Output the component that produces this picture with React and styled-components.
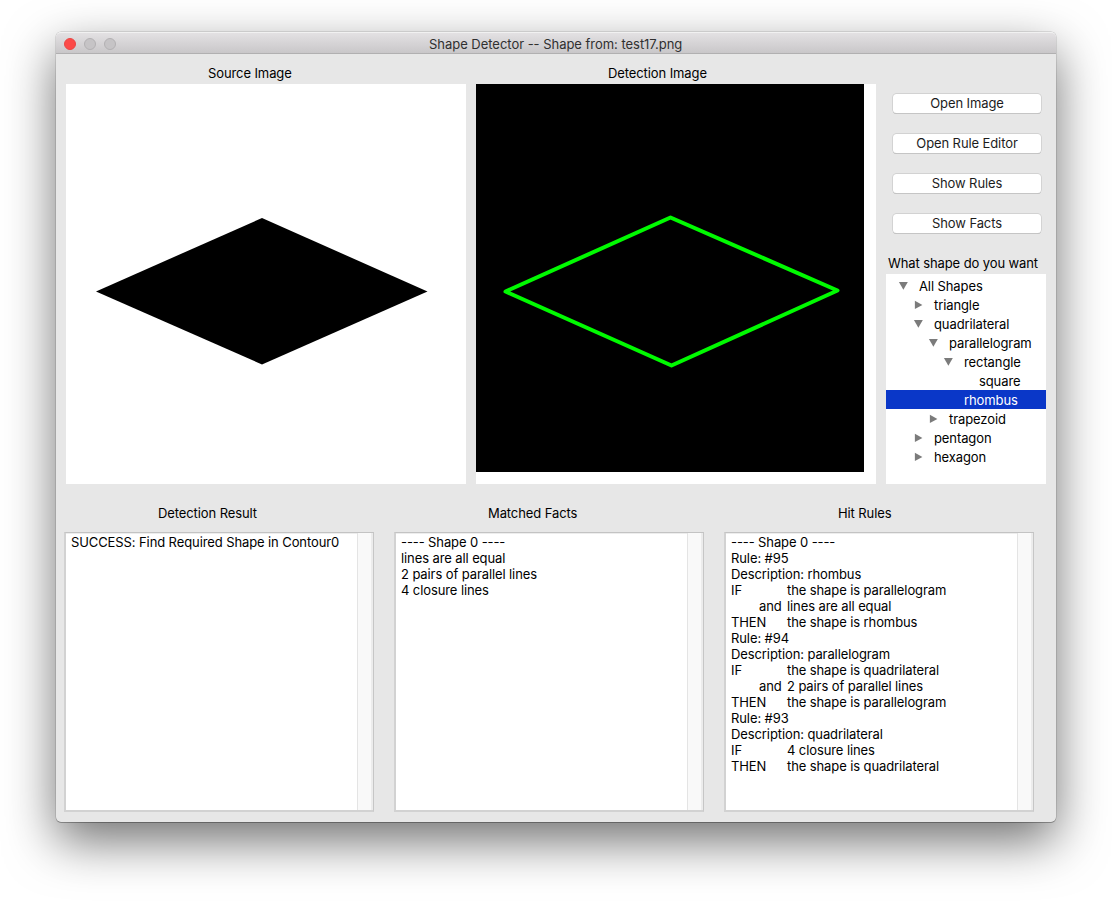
import React from "react";
import styled, { createGlobalStyle } from "styled-components";

const GlobalStyle = createGlobalStyle`
  * { box-sizing: border-box; }
  body { margin: 0; background: #fff; overflow: hidden; }
`;

const Desktop = styled.div`
  width: 1112px;
  height: 902px;
  padding: 32px 56px 80px;
  overflow: hidden;
  background: #fff;
  font-family: Inter, "Liberation Sans", sans-serif;
  font-size: 13px;
  line-height: 16px;
  letter-spacing: -0.1px;
  color: #000;
`;

const Window = styled.div`
  width: 1000px;
  height: 790px;
  border-radius: 5px;
  background: #e7e7e7;
  box-shadow: 0 0 0 0.5px rgba(0, 0, 0, 0.2), 0 1px 0 rgba(0, 0, 0, 0.22),
    0 19px 50px rgba(0, 0, 0, 0.56);
`;

const TitleBar = styled.header`
  display: grid;
  grid-template-columns: 365px 1fr;
  align-items: center;
  height: 22px;
  padding: 1px 0 0 8px;
  border-radius: 5px 5px 0 0;
  border-top: 1px solid #f1f1f1;
  border-bottom: 1px solid #b1b0b1;
  background: linear-gradient(#e3e1e3, #c9c7c9);
  color: #303030;
`;

const Lights = styled.div`
  display: flex;
  gap: 8px;
`;

const Light = styled.span`
  width: 12px;
  height: 12px;
  border-radius: 50%;
  background: ${(p) => (p.$active ? "#fc4a48" : "#c6c4c6")};
  border: 1px solid ${(p) => (p.$active ? "#ea4644" : "#b3b1b3")};
`;

const WindowTitle = styled.span`
  white-space: pre;
  letter-spacing: -0.03px;
`;

const Upper = styled.section`
  display: grid;
  grid-template-columns: 400px 400px 160px;
  column-gap: 10px;
  height: 430px;
  padding-left: 10px;
`;

const Column = styled.div`
  display: flex;
  flex-direction: column;
`;

const Heading = styled.h2`
  margin: 0;
  height: 30px;
  padding: 11px 0 0 ${(p) => p.$indent}px;
  font-size: 13px;
  font-weight: 400;
  line-height: 16px;
`;

const Picture = styled.svg`
  display: block;
  width: 400px;
  height: 400px;
  background: #fff;
`;

const Buttons = styled.div`
  display: flex;
  flex-direction: column;
  gap: 21px;
  padding: 40px 5px 1px 7px;
`;

const Button = styled.button`
  height: 19px;
  padding: 0;
  border: 0;
  border-radius: 3.5px;
  background: #fff;
  box-shadow: 0 0 0 0.7px #cbcbcb, 0 1px 0.5px #b0b0b0;
  font: inherit;
  letter-spacing: inherit;
  line-height: 19px;
  color: #1c1c1c;
`;

const Question = styled.div`
  height: 40px;
  padding: 21px 0 0 2px;
  white-space: nowrap;
`;

const Tree = styled.ul`
  list-style: none;
  margin: 0;
  padding: 2px 0 0;
  height: 210px;
  background: #fff;
`;

const TreeRow = styled.li`
  display: flex;
  align-items: center;
  height: 19px;
  padding: 1px 0 0 ${(p) => 12 + p.$level * 15}px;
  background: ${(p) => (p.$selected ? "#0a37c8" : "transparent")};
  color: ${(p) => (p.$selected ? "#fff" : "#000")};
`;

const ArrowSlot = styled.svg`
  width: 12px;
  height: 12px;
  margin-right: 9px;
  fill: #7b7b7b;
`;

const Lower = styled.section`
  display: grid;
  grid-template-columns: repeat(3, 310px);
  column-gap: 20px;
  padding: 10px 0 0 8px;
`;

const LogHeading = styled(Heading)`
  height: 38px;
`;

const LogBox = styled.div`
  display: grid;
  grid-template-columns: 1fr 16px;
  height: 280px;
  border: 2px solid #d2d2d2;
  border-top: 1px solid #c3c3c3;
  border-right: 1px solid #c6c6c6;
  background: #fff;
`;

const LogText = styled.div`
  padding: 1px 0 0 5px;
  box-shadow: inset 0 1px 0 #ededed;
`;

const ScrollTrack = styled.div`
  border-left: 1px solid #e4e4e4;
  border-right: 2px solid #ececec;
  background: #f9f9f9;
`;

const Line = styled.div`
  display: grid;
  grid-template-columns: ${(p) => (p.$columns ? "28px 28px 1fr" : "1fr")};
  height: 16px;
  white-space: pre;
`;

const Arrow = ({ state }) => (
  <ArrowSlot viewBox="0 0 12 12">
    {state === "open" && <path d="M0.9 2h8.9L5.4 9.7z" />}
    {state === "closed" && <path d="M1.9 1.7v8.4L9.4 5.9z" />}
  </ArrowSlot>
);

const tree = [
  { name: "All Shapes", level: 0, state: "open" },
  { name: "triangle", level: 1, state: "closed" },
  { name: "quadrilateral", level: 1, state: "open" },
  { name: "parallelogram", level: 2, state: "open" },
  { name: "rectangle", level: 3, state: "open" },
  { name: "square", level: 4 },
  { name: "rhombus", level: 3, selected: true },
  { name: "trapezoid", level: 2, state: "closed" },
  { name: "pentagon", level: 1, state: "closed" },
  { name: "hexagon", level: 1, state: "closed" },
];

const actions = ["Open Image", "Open Rule Editor", "Show Rules", "Show Facts"];

const logs = [
  {
    title: "Detection Result",
    indent: 94,
    lines: [["SUCCESS: Find Required Shape in Contour0"]],
  },
  {
    title: "Matched Facts",
    indent: 94,
    lines: [
      ["---- Shape 0 ----"],
      ["lines are all equal"],
      ["2 pairs of parallel lines"],
      ["4 closure lines"],
    ],
  },
  {
    title: "Hit Rules",
    indent: 114,
    lines: [
      ["---- Shape 0 ----"],
      ["Rule: #95"],
      ["Description: rhombus"],
      ["IF", "", "the shape is parallelogram"],
      ["", "and", "lines are all equal"],
      ["THEN", "", "the shape is rhombus"],
      ["Rule: #94"],
      ["Description: parallelogram"],
      ["IF", "", "the shape is quadrilateral"],
      ["", "and", "2 pairs of parallel lines"],
      ["THEN", "", "the shape is parallelogram"],
      ["Rule: #93"],
      ["Description: quadrilateral"],
      ["IF", "", "4 closure lines"],
      ["THEN", "", "the shape is quadrilateral"],
    ],
  },
];

export default function App() {
  return (
    <Desktop>
      <GlobalStyle />
      <Window>
        <TitleBar>
          <Lights>
            <Light $active />
            <Light />
            <Light />
          </Lights>
          <WindowTitle>Shape Detector -- Shape from: test17.png</WindowTitle>
        </TitleBar>
        <Upper>
          <Column>
            <Heading $indent={142}>Source Image</Heading>
            <Picture viewBox="0 0 400 400">
              <path d="M30 207.5 196 134 361.5 207.5 196 280.5z" fill="#000" />
            </Picture>
          </Column>
          <Column>
            <Heading $indent={132}>Detection Image</Heading>
            <Picture viewBox="0 0 400 400">
              <rect width="388" height="388" fill="#000" />
              <path
                d="M29.5 207.5 194.5 133.5 361.5 206.5 195.5 281.5z"
                fill="none"
                stroke="#00fa00"
                strokeWidth="4"
                strokeLinejoin="round"
              />
            </Picture>
          </Column>
          <Column>
            <Buttons>
              {actions.map((text) => (
                <Button key={text}>{text}</Button>
              ))}
            </Buttons>
            <Question>What shape do you want</Question>
            <Tree>
              {tree.map((item) => (
                <TreeRow key={item.name} $level={item.level} $selected={item.selected}>
                  <Arrow state={item.state} />
                  <span>{item.name}</span>
                </TreeRow>
              ))}
            </Tree>
          </Column>
        </Upper>
        <Lower>
          {logs.map((log) => (
            <Column key={log.title}>
              <LogHeading $indent={log.indent}>{log.title}</LogHeading>
              <LogBox>
                <LogText>
                  {log.lines.map((cells, i) => (
                    <Line key={i} $columns={cells.length > 1}>
                      {cells.map((text, j) => (
                        <span key={j}>{text}</span>
                      ))}
                    </Line>
                  ))}
                </LogText>
                <ScrollTrack />
              </LogBox>
            </Column>
          ))}
        </Lower>
      </Window>
    </Desktop>
  );
}
